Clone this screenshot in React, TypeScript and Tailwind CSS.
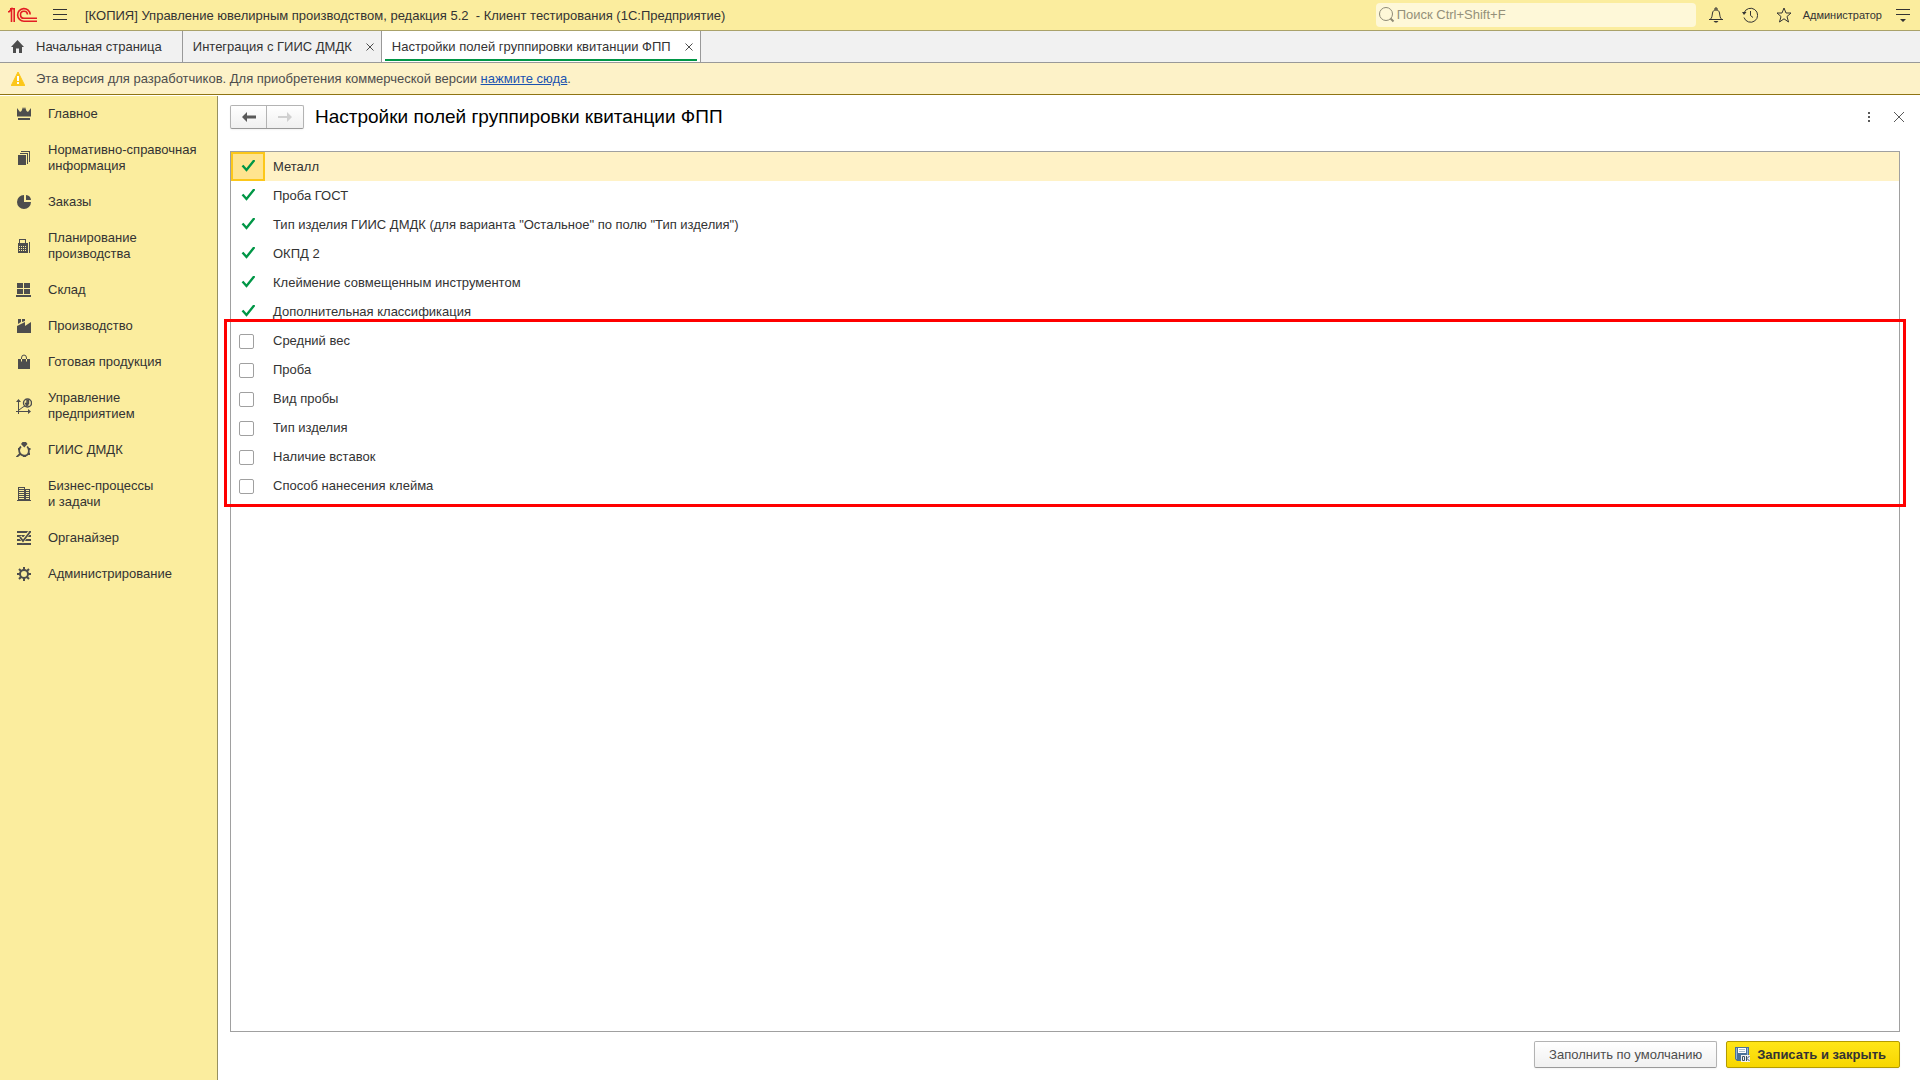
import { useState } from "react";
import type { ReactNode } from "react";

type MenuItem = {
  title: string;
  icon: ReactNode;
};

type Field = {
  id: string;
  title: string;
  checked: boolean;
};

const menuItems: MenuItem[] = [
  {
    title: "Главное",
    icon: (
      <path d="M1 2l3 4 1.500-1L7 1l1 2 1-2 1.500 4L12 6l3-4v8.500H1zM2 12h12v2H2z" />
    ),
  },
  {
    title: "Нормативно-справочная информация",
    icon: (
      <path d="M2 5h8v10H2zM4 3h8v11h-1V4H4zM5 1h9v11h-1V2H5z" />
    ),
  },
  {
    title: "Заказы",
    icon: (
      <path d="M8 1v7h7a7 7 0 1 1-7-7zM10 1a5.500 5.500 0 0 1 5 5h-5z" />
    ),
  },
  {
    title: "Планирование производства",
    icon: (
      <path
        fillRule="evenodd"
        d="M3 1h7v4h1v10H2V5h1zM4 2v3h5V2zM3 8v1h1V8zm2 0v1h1V8zm2 0v1h1V8zm2 0v1h1V8zM3 10v1h1v-1zm2 0v1h1v-1zm2 0v1h1v-1zm2 0v1h1v-1zM3 12v1h1v-1zm2 0v1h1v-1zm2 0v1h1v-1zm2 0v1h1v-1zM13 4h1v11h-1zM11 5h1v10h-1z"
      />
    ),
  },
  {
    title: "Склад",
    icon: (
      <path d="M1 1h6v5H1zM8 1h6v5H8zM1 7h6v5H1zM8 7h6v5H8zM0 13h15v2H0z" />
    ),
  },
  {
    title: "Производство",
    icon: (
      <path d="M2 1h3v3L2 6zM6 1h3v2L6 4zM1 8l8-4v4l6-4v11H1z" />
    ),
  },
  {
    title: "Готовая продукция",
    icon: (
      <>
        <path d="M2 5h12v10H2z" />
        <path d="M5.500 5V4a2.500 3 0 0 1 5 0v1" fill="none" stroke="currentColor" />
        <path d="M5.500 5v2.500M10.500 5v2.500" fill="none" stroke="#fbed9e" />
      </>
    ),
  },
  {
    title: "Управление предприятием",
    icon: (
      <>
        <path d="M2 3h1v10h10v1H3v2H2v-2H0v-1h2zM0 4l2.500-3L5 4zM12 11l3 2.500-3 2.500z" />
        <path d="M3 12l4-3 2-1" fill="none" stroke="currentColor" />
        <circle cx="11.500" cy="5" r="4" fill="none" stroke="currentColor" strokeWidth="1.400" />
        <path
          d="M9 5.500h3.500v-3H11V8M9.500 7h3"
          fill="none"
          stroke="currentColor"
          strokeWidth="1.400"
        />
      </>
    ),
  },
  {
    title: "ГИИС ДМДК",
    icon: (
      <>
        <path d="M6.500 0h3.500l1.500 2-3.200 3.500L5 2zM0 14.500L3.500 11l1.500 1.500L2 15H0z" />
        <path
          d="M5 4.500C2.500 6.500 2.500 10.500 5 12.500s5.500 1.500 7-.5 1-5.500-.800-7.500"
          fill="none"
          stroke="currentColor"
          strokeWidth="1.800"
        />
        <path d="M2 6h2v2H2zM12.500 6h2v2h-2zM12 11h2v2h-2zM7 13h3v2H7z" />
      </>
    ),
  },
  {
    title: "Бизнес-процессы и задачи",
    icon: (
      <path
        fillRule="evenodd"
        d="M2 1h7v2h5v11h1v1H1v-1h1zM3 2v1h5V2zm0 2v1h5V4zm0 2v1h5V6zm0 2v1h5V8zm0 2v1h5v-1zm0 2v1h5v-1zM10 4v1h3V4zm0 2v1h3V6zm0 2v1h3V8zm0 2v1h3v-1zm0 2v1h3v-1z"
      />
    ),
  },
  {
    title: "Органайзер",
    icon: (
      <>
        <path d="M1 1h14v2H1zM1 5h14v2H1zM1 9h14v2H1zM1 13h14v2H1z" />
        <path d="M4 6.500l3 4L13.500 2" fill="none" stroke="#fbed9e" strokeWidth="3.500" />
        <path d="M4 7l3 4L14 2" fill="none" stroke="currentColor" strokeWidth="1.800" />
      </>
    ),
  },
  {
    title: "Администрирование",
    icon: (
      <>
        <circle cx="8" cy="8" r="4" fill="none" stroke="currentColor" strokeWidth="2" />
        <path
          d="M8 1v3M8 12v3M1 8h3M12 8h3M3 3l2 2M11 11l2 2M13 3l-2 2M5 11l-2 2"
          fill="none"
          stroke="currentColor"
          strokeWidth="2"
        />
      </>
    ),
  },
];

const mainFields: Field[] = [
  { id: "metal", title: "Металл", checked: true },
  { id: "gost", title: "Проба ГОСТ", checked: true },
  {
    id: "giis-type",
    title: 'Тип изделия ГИИС ДМДК (для варианта "Остальное" по полю "Тип изделия")',
    checked: true,
  },
  { id: "okpd", title: "ОКПД 2", checked: true },
  { id: "stamping", title: "Клеймение совмещенным инструментом", checked: true },
  { id: "extra-class", title: "Дополнительная классификация", checked: true },
];

const extraFields: Field[] = [
  { id: "avg-weight", title: "Средний вес", checked: false },
  { id: "probe", title: "Проба", checked: false },
  { id: "probe-kind", title: "Вид пробы", checked: false },
  { id: "type", title: "Тип изделия", checked: false },
  { id: "inserts", title: "Наличие вставок", checked: false },
  { id: "stamp-method", title: "Способ нанесения клейма", checked: false },
];

function CloseIcon() {
  return (
    <svg className="size-2" viewBox="0 0 8 8" fill="none" stroke="#4d4d4d">
      <path d="M.5.5l7 7M7.500.5l-7 7" />
    </svg>
  );
}

function Header() {
  return (
    <header className="flex h-[31px] items-center border-b border-[#aaa26a] bg-[#fbed9e] pr-2.5 pl-2">
      <svg className="h-4 w-[30px] shrink-0" viewBox="0 0 30 16" fill="none" stroke="#e31e24" strokeWidth="1.600">
        <path d="M0 4.800h1.200L3.500 2V15M2 1.800h4.200V15" />
        <path d="M22.200 7.500A6.300 6.300 0 1 0 16 14.200h13" />
        <path d="M19.500 7.500A3.500 3.500 0 1 0 16 11.300h13" />
      </svg>
      <button aria-label="Меню" className="ml-[15px]">
        <svg className="h-3 w-3.5" viewBox="0 0 14 12" fill="#333">
          <path d="M0 0h14v1H0zM0 5h14v1H0zM0 10h14v1H0z" />
        </svg>
      </button>
      <h1 className="ml-[18px] pt-px whitespace-pre">
        {"[КОПИЯ] Управление ювелирным производством, редакция 5.2  - Клиент тестирования (1С:Предприятие)"}
      </h1>
      <div className="ml-auto flex h-6 w-80 items-center rounded-sm bg-[#fef8d8] pl-[3px]">
        <svg className="size-4 shrink-0" viewBox="0 0 16 16" fill="none" stroke="#8f8b76">
          <circle cx="7" cy="7" r="6.500" />
          <path d="M11.500 11.500l3 3" strokeWidth="2" />
        </svg>
        <input
          aria-label="Поиск"
          placeholder="Поиск Ctrl+Shift+F"
          className="ml-0.5 w-full bg-transparent outline-none placeholder:text-[#94907a]"
        />
      </div>
      <button aria-label="Уведомления" className="ml-3">
        <svg className="size-4" viewBox="0 0 16 16" fill="none" stroke="#333">
          <path d="M1 12.500h14M2.500 12c1.500-1 1.500-3 2-6 .3-2 1.500-3 3.500-3s3.200 1 3.500 3c.5 3 .5 5 2 6M7 3V1h2v2" />
          <path d="M5.500 14h5L9 15.500H7z" fill="#333" stroke="none" />
        </svg>
      </button>
      <button aria-label="История" className="ml-[18px]">
        <svg className="size-4" viewBox="0 0 16 16" fill="none" stroke="#333">
          <path d="M2 6a7 7 0 1 1 0 4.500M8.500 4v4.500l2.500 2" />
          <path d="M0 5h4.500L2 8z" fill="#333" stroke="none" />
        </svg>
      </button>
      <button aria-label="Избранное" className="ml-[18px]">
        <svg className="size-4" viewBox="0 0 16 16" fill="none" stroke="#333">
          <path d="M8 1l2 5h5l-4 3.500L12.500 15 8 11.800 3.500 15 5 9.500 1 6h5z" />
        </svg>
      </button>
      <button className="ml-[11px] text-[11px] text-[#333]">Администратор</button>
      <button aria-label="Сервис и настройки" className="ml-3.5">
        <svg className="h-3.5 w-3.5" viewBox="0 0 14 14" fill="#333">
          <path d="M0 1h14v1H0zM0 6h14v1H0zM4 11h6l-3 3z" />
        </svg>
      </button>
    </header>
  );
}

function Tabs() {
  return (
    <nav className="flex h-8 border-b border-[#999] bg-[#f1f1f1]">
      <button className="flex items-center gap-3 border-r border-[#999] pr-5 pl-[11px]">
        <svg className="size-[13px]" viewBox="0 0 13 13" fill="#4d4d4d">
          <path d="M6.500 0L13 7h-2v6H8V8.500H5V13H2V7H0z" />
        </svg>
        Начальная страница
      </button>
      <div className="flex items-center gap-3.5 border-r border-[#999] pr-[7px] pl-2.5">
        <button>Интеграция с ГИИС ДМДК</button>
        <button aria-label="Закрыть вкладку">
          <CloseIcon />
        </button>
      </div>
      <div className="flex flex-col border-r border-[#999] bg-white px-[3px] pb-px">
        <div className="flex flex-1 items-center gap-3.5 border-b-2 border-[#009646] pt-[3px] pr-1 pl-[7px]">
          <button>Настройки полей группировки квитанции ФПП</button>
          <button aria-label="Закрыть вкладку">
            <CloseIcon />
          </button>
        </div>
      </div>
    </nav>
  );
}

function Banner() {
  return (
    <div className="flex h-8 items-center gap-[11px] border-b border-[#8f7413] bg-[#fdf2c8] pl-[11px] text-[#4d4d4d]">
      <svg className="size-3.5" viewBox="0 0 14 14">
        <path d="M7 0l7 14H0z" fill="#fcc71a" stroke="#fcc71a" strokeLinejoin="round" />
        <path d="M6 4h2v5H6zM6 10h2v2H6z" fill="#fff" />
      </svg>
      <p>
        Эта версия для разработчиков. Для приобретения коммерческой версии{" "}
        <a href="#buy" className="text-[#1a52b0] underline">
          нажмите сюда
        </a>
        .
      </p>
    </div>
  );
}

function Sidebar() {
  return (
    <aside className="w-[218px] shrink-0 border-r border-[#97905f] bg-[#fbed9e]">
      {menuItems.map((item) => (
        <a key={item.title} href="#section" className="flex items-center gap-4 py-2.5 pr-4 pl-4 leading-4">
          <svg className="size-4 shrink-0 text-[#4d4d4d]" viewBox="0 0 16 16" fill="currentColor">
            {item.icon}
          </svg>
          {item.title === "Бизнес-процессы и задачи" ? (
            <span>
              Бизнес-процессы
              <br />и задачи
            </span>
          ) : (
            item.title
          )}
        </a>
      ))}
    </aside>
  );
}

export default function App() {
  const [checkedIds, setCheckedIds] = useState(
    [...mainFields, ...extraFields].filter((f) => f.checked).map((f) => f.id)
  );
  const [currentId, setCurrentId] = useState("metal");

  function toggle(id: string) {
    setCurrentId(id);
    setCheckedIds((ids) =>
      ids.includes(id) ? ids.filter((i) => i !== id) : [...ids, id]
    );
  }

  function renderRow(field: Field) {
    const isCurrent = field.id === currentId;
    return (
      <tr key={field.id} className={isCurrent ? "h-[29px] bg-[#fff2c6]" : "h-[29px]"}>
        <td
          className={
            isCurrent
              ? "w-[34px] border-2 border-[#fcc71a] bg-[#ffe48f] p-0 pl-1.5"
              : "w-[34px] p-0 pl-2"
          }
        >
          <span className="grid w-[15px] pt-0.5">
            <input
              id={field.id}
              type="checkbox"
              checked={checkedIds.includes(field.id)}
              onChange={() => toggle(field.id)}
              className="peer col-start-1 row-start-1 size-[15px] appearance-none rounded-xs border border-[#a0a0a0] bg-white checked:border-transparent checked:bg-transparent"
            />
            <svg
              className="pointer-events-none invisible col-start-1 row-start-1 h-[15px] w-4 peer-checked:visible"
              viewBox="0 0 16 15"
              fill="none"
              stroke="#009646"
              strokeWidth="2.400"
            >
              <path d="M3.500 5.500l4 4.500L15.500 0" />
            </svg>
          </span>
        </td>
        <td className="p-0 pl-2">
          <label htmlFor={field.id}>{field.title}</label>
        </td>
      </tr>
    );
  }

  return (
    <div className="flex min-h-screen flex-col bg-white font-['Liberation_Sans',Arial,sans-serif] text-[13px] leading-4 text-[#333]">
      <Header />
      <Tabs />
      <Banner />
      <div className="mt-px flex flex-1">
        <Sidebar />
        <main className="flex flex-1 flex-col pt-[9px] pr-5 pb-3 pl-3">
          <div className="flex h-6 items-center">
            <div className="flex h-6 rounded-xs border border-[#b3b3b3] border-b-[#999] bg-linear-to-b from-white to-[#f0f0f0] shadow-xs">
              <button aria-label="Назад" className="flex w-9 items-center justify-center border-r border-[#b3b3b3]">
                <svg className="h-2.5 w-3.5" viewBox="0 0 14 10" fill="#595959">
                  <path d="M0 5l5-5v3.500h9v3H5V10z" />
                </svg>
              </button>
              <button aria-label="Вперед" className="flex w-9 items-center justify-center">
                <svg className="h-2.5 w-3.5" viewBox="0 0 14 10" fill="#d0d0d0">
                  <path d="M14 5L9 0v4H0v2h9v4z" />
                </svg>
              </button>
            </div>
            <h2 className="ml-[11px] text-[19px] leading-6 text-black">
              Настройки полей группировки квитанции ФПП
            </h2>
            <button aria-label="Еще" className="mr-6 ml-auto">
              <svg className="h-2.5 w-0.5" viewBox="0 0 2 10" fill="#595959">
                <path d="M0 0h2v2H0zM0 4h2v2H0zM0 8h2v2H0z" />
              </svg>
            </button>
            <button aria-label="Закрыть" className="-mr-1">
              <svg className="size-2.5" viewBox="0 0 10 10" fill="none" stroke="#595959">
                <path d="M0 0l10 10M10 0L0 10" />
              </svg>
            </button>
          </div>

          <div className="mt-[22px] flex-1 border border-[#a0a0a0]">
            <table className="w-full border-separate border-spacing-0 text-left">
              <tbody>{mainFields.map(renderRow)}</tbody>
              <tbody className="outline-3 outline-offset-4 outline-[#ff0000]">
                {extraFields.map(renderRow)}
              </tbody>
            </table>
          </div>

          <div className="mt-[9px] flex justify-end gap-[9px]">
            <button className="h-[27px] rounded-xs border border-[#b3b3b3] border-b-[#999] bg-linear-to-b from-white to-[#f0f0f0] px-3.5 text-[#4d4d4d] shadow-xs">
              Заполнить по умолчанию
            </button>
            <button className="flex h-[27px] items-center gap-[7px] rounded-xs border border-[#b39b00] bg-linear-to-b from-[#ffe617] to-[#f7d600] pr-[13px] pl-2 font-bold shadow-xs">
              <svg className="size-[15px]" viewBox="0 0 15 15">
                <path d="M0 0h14v14H2l-2-2z" fill="#4a7199" />
                <path d="M1 1h1v11H1zM12 1h1v7h-1z" fill="#8fb4d6" />
                <path d="M3 1h8v5H3z" fill="#fff" />
                <path d="M4 2h6v1H4zM4 4h6v1H4z" fill="#a9bccd" />
                <path d="M6 8h9v7H6z" fill="#f0f0f0" />
                <path d="M7.500 9.500h2v4h-2zM11.500 9v5M14.500 9l-2.500 2.500 2.500 2.500" fill="none" stroke="#3b5266" />
              </svg>
              Записать и закрыть
            </button>
          </div>
        </main>
      </div>
    </div>
  );
}
